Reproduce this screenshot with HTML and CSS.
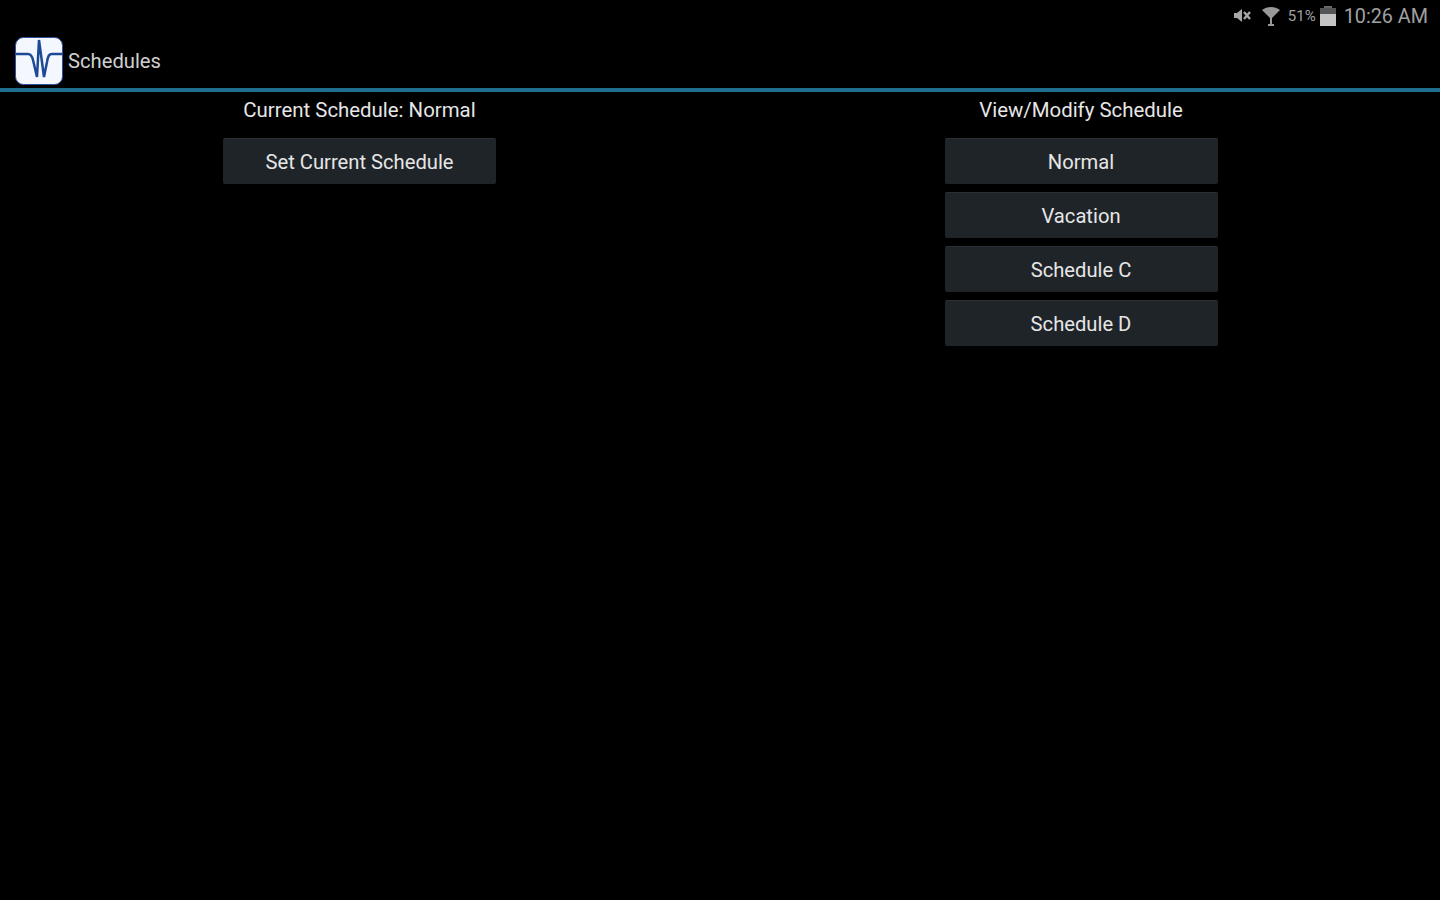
FILE: index.html
```html
<!DOCTYPE html>
<html lang="en">
<head>
  <meta charset="UTF-8">
  <title>Schedules</title>
  <link rel="stylesheet" href="styles.css">
</head>
<body>
  <!-- Status Bar -->
  <div class="status-bar">
    <svg class="status-icon" width="18" height="16" viewBox="0 0 18 16">
      <path d="M1 5h3l5-4v13l-5-4H1z" fill="#a8a8a8"/>
      <path d="M11 4l6 7M17 4l-6 7" stroke="#a8a8a8" stroke-width="2.4"/>
    </svg>
    <svg class="status-icon wifi" width="20" height="20" viewBox="0 0 20 20">
      <path d="M1 4c5-4 13-4 18 0l-9 9z" fill="#999"/>
      <path d="M10 11v8M7 19h6" stroke="#999" stroke-width="2"/>
    </svg>
    <span class="battery-pct">51%</span>
    <div class="battery">
      <div class="battery-cap"></div>
      <div class="battery-body"></div>
    </div>
    <span class="clock">10:26 AM</span>
  </div>

  <!-- Action Bar -->
  <header class="action-bar">
    <svg class="app-icon" width="48" height="48" viewBox="0 0 48 48">
      <rect x="0.5" y="0.5" width="47" height="47" rx="8" fill="#f4f7fd" stroke="#2a4f9c"/>
      <path d="M1 17h12c3 0 4 2 5 6l4 17 2-37 5 37 3-15c1-6 2-8 5-8h10" fill="none" stroke="#1d4a96" stroke-width="2.5"/>
    </svg>
    <span class="app-title">Schedules</span>
  </header>

  <main class="columns">
    <section class="column">
      <div class="column-title">Current Schedule: Normal</div>
      <button class="schedule-button">Set Current Schedule</button>
    </section>
    <section class="column">
      <div class="column-title">View/Modify Schedule</div>
      <button class="schedule-button">Normal</button>
      <button class="schedule-button">Vacation</button>
      <button class="schedule-button">Schedule C</button>
      <button class="schedule-button">Schedule D</button>
    </section>
  </main>
</body>
</html>
```

FILE: styles.css
```css
body {
  background-color: #000;
  font-family: Roboto, "Liberation Sans", sans-serif;
  color: #e6e6e6;
  margin: 0;
  padding: 0;
  min-height: 100vh;
  overflow: hidden;
}
/* Status Bar */
.status-bar {
  height: 32px;
  display: flex;
  align-items: center;
  justify-content: flex-end;
  padding-right: 12px;
  color: #a0a0a0;
}
.status-icon {
  margin-right: 10px;
}
.status-icon.wifi {
  margin-right: 7px;
}
.battery-pct {
  font-size: 15px;
  margin-right: 4px;
}
.battery {
  display: flex;
  flex-direction: column;
  align-items: center;
  margin-right: 8px;
}
.battery-cap {
  width: 8px;
  height: 2px;
  background-color: #666;
}
.battery-body {
  width: 16px;
  height: 18px;
  background: linear-gradient(#555 0 35%, #c4c4c4 35%);
}
.clock {
  font-size: 19.8px;
}
/* Action Bar */
.action-bar {
  height: 56px;
  box-sizing: border-box;
  display: flex;
  align-items: center;
  padding: 1px 0 0 15px;
}
.app-title {
  font-size: 20.2px;
  color: #d0d0d0;
  margin-left: 5px;
}
/* Columns */
.columns {
  display: grid;
  grid-template-columns: 719px 1fr;
  column-gap: 3px;
  border-top: 4px solid #1f6f8f;
}
.column {
  display: flex;
  flex-direction: column;
  align-items: center;
  gap: 8px;
}
.column-title {
  font-size: 20.4px;
  line-height: 36px;
  margin-bottom: 2px;
}
.schedule-button {
  width: 273px;
  height: 46px;
  font-family: inherit;
  font-size: 20.2px;
  color: #e6e6e6;
  background-color: #1f2429;
  border: none;
  border-top: 1px solid #2b3036;
  border-radius: 2px;
  padding: 0;
}
```
